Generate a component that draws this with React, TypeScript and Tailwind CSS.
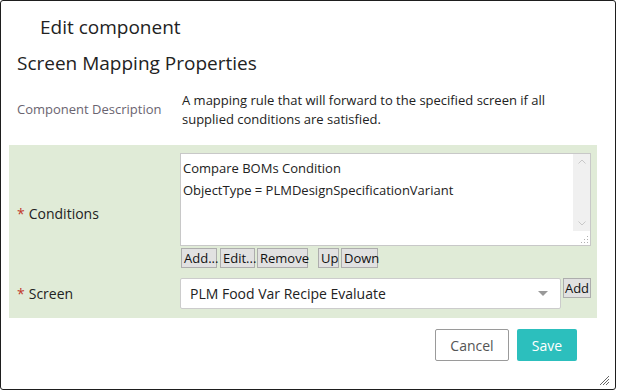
import React from "react";

const font = "font-['Open_Sans','Noto_Sans',sans-serif]";

function SmallButton({ label, className = "" }: { label: string; className?: string }) {
  return (
    <button
      className={`h-[20px] px-[2px] bg-[#e1e1e1] border border-[#adadad] text-[13px] leading-[18px] text-[#111] ${className}`}
    >
      {label}
    </button>
  );
}

export default function App() {
  return (
    <div className={`w-[618px] h-[391px] bg-white ${font}`}>
      <div className="relative w-[616px] h-[390px] border border-[#1e1e1e] rounded-[3px] bg-white">
        <div className="pl-[39px] pt-[12px] text-[19px] leading-[28px] text-[#222]">Edit component</div>
        <div className="pl-[16px] mt-[8px] text-[19px] leading-[28px] text-[#222]">
          Screen Mapping Properties
        </div>

        <div className="flex mt-[14px]">
          <div className="w-[181px] pl-[16px] pt-[9px] text-[13px] leading-[19px] text-[#6a6470]">
            Component Description
          </div>
          <div className="w-[380px] text-[13px] leading-[19px] text-[#222]">
            A mapping rule that will forward to the specified screen if all supplied conditions are satisfied.
          </div>
        </div>

        <div className="ml-[8px] mt-[16px] w-[588px] h-[173px] bg-[#e0ebd7] pt-[8px]">
          <div className="flex">
            <div className="w-[171px] pl-[8px] pt-[51px] text-[14px] leading-[20px] text-[#222]">
              <span className="text-[#c0392b] mr-[4px]">*</span>Conditions
            </div>
            <div className="flex flex-col">
              <div className="flex w-[411px] h-[93px] bg-white border border-[#c8c8c8]">
                <div className="flex-1 pl-[2px] pt-[3px] text-[13px] leading-[22px] text-[#222]">
                  <div>Compare BOMs Condition</div>
                  <div>ObjectType = PLMDesignSpecificationVariant</div>
                </div>
                <div className="w-[17px] flex flex-col">
                  <div className="h-[77px] bg-[#f0f0f0] flex flex-col items-center justify-between py-[5px]">
                    <svg width="8" height="5" viewBox="0 0 8 5">
                      <path d="M0.5 4.5 L4 1 L7.5 4.5" fill="none" stroke="#c8c8c8" strokeWidth="1" />
                    </svg>
                    <svg width="8" height="5" viewBox="0 0 8 5">
                      <path d="M0.5 0.5 L4 4 L7.5 0.5" fill="none" stroke="#c8c8c8" strokeWidth="1" />
                    </svg>
                  </div>
                  <div className="flex-1 flex items-end justify-end pr-[1px] pb-[1px]">
                    <svg width="8" height="8" viewBox="0 0 8 8">
                      <rect x="6" y="0" width="1" height="1" fill="#b0b0b0" />
                      <rect x="3" y="3" width="1" height="1" fill="#b0b0b0" />
                      <rect x="6" y="3" width="1" height="1" fill="#b0b0b0" />
                      <rect x="0" y="6" width="1" height="1" fill="#b0b0b0" />
                      <rect x="3" y="6" width="1" height="1" fill="#b0b0b0" />
                      <rect x="6" y="6" width="1" height="1" fill="#b0b0b0" />
                    </svg>
                  </div>
                </div>
              </div>
              <div className="flex mt-[2px] pl-[1px]">
                <SmallButton label="Add..." className="w-[36px]" />
                <SmallButton label="Edit..." className="w-[35px] ml-[3px]" />
                <SmallButton label="Remove" className="w-[51px] ml-[2px]" />
                <SmallButton label="Up" className="w-[21px] ml-[10px]" />
                <SmallButton label="Down" className="w-[37px] ml-[2px]" />
              </div>
            </div>
          </div>

          <div className="flex mt-[10px]">
            <div className="w-[171px] pl-[8px] pt-[6px] text-[14px] leading-[20px] text-[#222]">
              <span className="text-[#c0392b] mr-[4px]">*</span>Screen
            </div>
            <div className="flex w-[381px] h-[31px] items-center justify-between bg-white border border-[#cccccc] rounded-[2px] pl-[9px] pr-[12px]">
              <span className="text-[14px] text-[#222]">PLM Food Var Recipe Evaluate</span>
              <svg width="10" height="5" viewBox="0 0 10 5">
                <path d="M0 0 L10 0 L5 5 Z" fill="#999" />
              </svg>
            </div>
            <button className="ml-[2px] h-[20px] w-[28px] bg-[#e1e1e1] border border-[#adadad] text-[13px] leading-[18px] text-[#111]">
              Add
            </button>
          </div>
        </div>

        <div className="flex justify-end pr-[38px] mt-[11px] gap-[8px]">
          <button className="w-[74px] h-[32px] bg-white border border-[#9a9a9a] rounded-[2px] text-[14px] text-[#555]">
            Cancel
          </button>
          <button className="w-[60px] h-[32px] bg-[#2cbfbd] rounded-[2px] text-[14px] text-white">Save</button>
        </div>

        <svg className="absolute right-[5px] bottom-[3px]" width="12" height="12" viewBox="0 0 12 12">
          <path d="M2 11 L11 2 M5 11 L11 5 M8 11 L11 8" stroke="#666" strokeWidth="1" />
        </svg>
      </div>
    </div>
  );
}
